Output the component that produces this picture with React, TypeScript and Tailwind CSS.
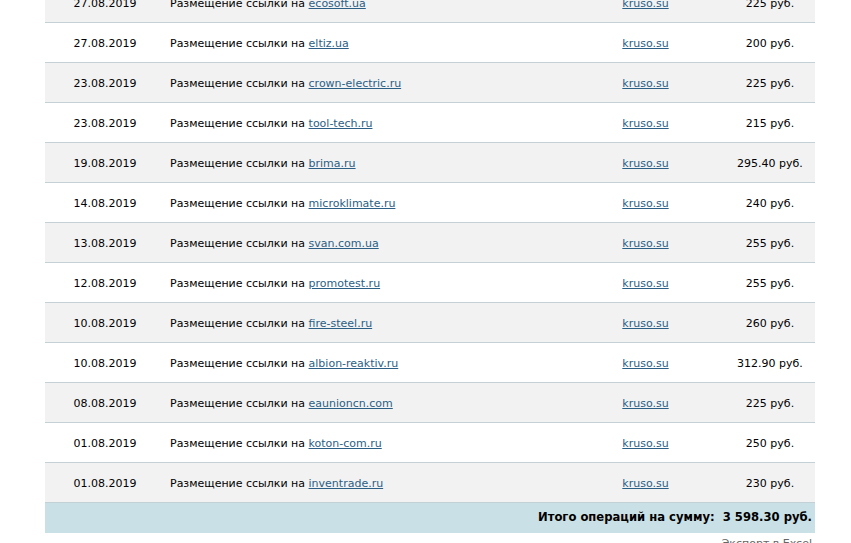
const rows = [
  { date: "27.08.2019", site: "ecosoft.ua", sum: "225 руб." },
  { date: "27.08.2019", site: "eltiz.ua", sum: "200 руб." },
  { date: "23.08.2019", site: "crown-electric.ru", sum: "225 руб." },
  { date: "23.08.2019", site: "tool-tech.ru", sum: "215 руб." },
  { date: "19.08.2019", site: "brima.ru", sum: "295.40 руб." },
  { date: "14.08.2019", site: "microklimate.ru", sum: "240 руб." },
  { date: "13.08.2019", site: "svan.com.ua", sum: "255 руб." },
  { date: "12.08.2019", site: "promotest.ru", sum: "255 руб." },
  { date: "10.08.2019", site: "fire-steel.ru", sum: "260 руб." },
  { date: "10.08.2019", site: "albion-reaktiv.ru", sum: "312.90 руб." },
  { date: "08.08.2019", site: "eaunioncn.com", sum: "225 руб." },
  { date: "01.08.2019", site: "koton-com.ru", sum: "250 руб." },
  { date: "01.08.2019", site: "inventrade.ru", sum: "230 руб." },
];

export default function App() {
  return (
    <div className="w-[851px] h-[543px] overflow-hidden bg-white font-['DejaVu_Sans',sans-serif] text-[11px] text-black">
      <div className="ml-[45px] w-[770px] -mt-[17px]">
        {rows.map((r, i) => (
          <div
            key={i}
            className={`flex h-[40px] items-center pt-[4px] border-b border-[#c3d0d6] ${i % 2 === 0 ? "bg-[#f2f2f2]" : "bg-white"}`}
          >
            <div className="w-[120px] text-center">{r.date}</div>
            <div className="w-[401px] pl-[5px]">
              Размещение ссылки на <a href="#" className="text-[#2b5f86] underline">{r.site}</a>
            </div>
            <div className="w-[159px] text-center">
              <a href="#" className="text-[#2b5f86] underline">kruso.su</a>
            </div>
            <div className="w-[90px] text-center">{r.sum}</div>
          </div>
        ))}
        <div className="flex h-[30px] items-center justify-end bg-[#c9e0e6] pr-[3px] text-[11.6px] font-bold">
          Итого операций на сумму:&nbsp; 3 598.30 руб.
        </div>
        <div className="pt-[3px] pr-[3px] text-right text-[#666]">Экспорт в Excel</div>
      </div>
    </div>
  );
}
